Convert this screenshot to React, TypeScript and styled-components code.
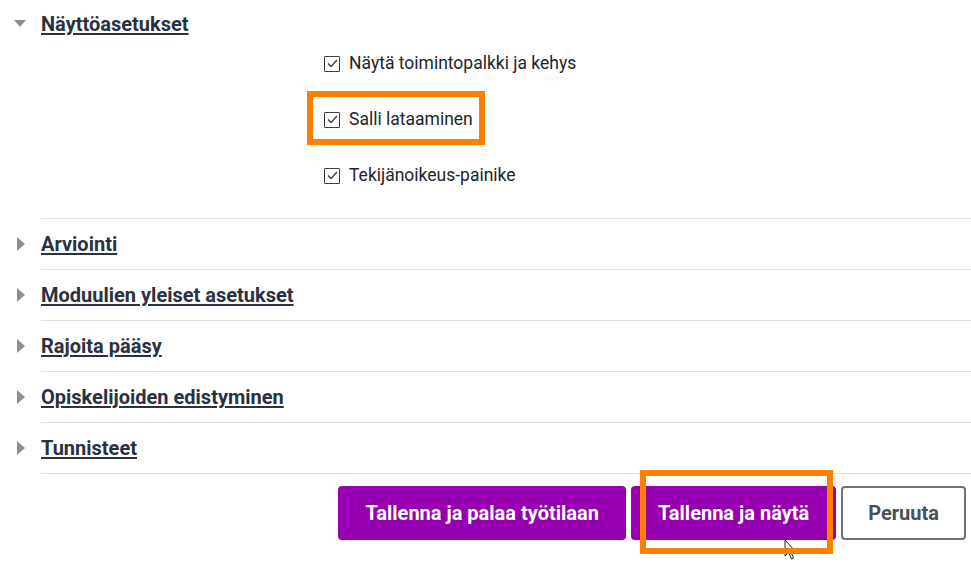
import * as React from 'react';
import styled, { createGlobalStyle } from 'styled-components';

const GlobalStyle = createGlobalStyle`
    html, body {
        margin: 0;
        padding: 0;
        background: #fff;
        overflow: hidden;
    }
    body {
        font-family: Roboto, "Liberation Sans", sans-serif;
        color: #1d2125;
    }
`;

const Page = styled.div`
    position: relative;
    width: 971px;
    height: 564px;
    overflow: hidden;
`;

const SectionHeader = styled.div`
    display: flex;
    align-items: center;
    height: 48px;
`;

const ToggleCell = styled.div`
    width: 41px;
    flex: 0 0 41px;
    display: flex;
    align-items: center;
    justify-content: center;
`;

const Caret = styled.span<{ $open?: boolean }>`
    display: block;
    width: 0;
    height: 0;
    ${(p) => p.$open ? `
        border-left: 6.5px solid transparent;
        border-right: 6.5px solid transparent;
        border-top: 7px solid #8f8f8f;
        margin-left: -1px;
        margin-top: -2px;
    ` : `
        border-top: 7px solid transparent;
        border-bottom: 7px solid transparent;
        border-left: 8px solid #8f8f8f;
        margin-left: 1px;
    `}
`;

const SectionTitle = styled.a`
    font-size: 20px;
    font-weight: 700;
    color: #2a3140;
    text-decoration: underline;
    text-underline-offset: 2px;
    text-decoration-thickness: 1.5px;
    cursor: pointer;
`;

const OptionList = styled.div`
    display: flex;
    flex-direction: column;
    padding-left: 324px;
    margin-top: -13px;
    padding-bottom: 15px;
`;

const OptionRow = styled.label`
    position: relative;
    display: flex;
    align-items: center;
    gap: 9px;
    height: 56px;
    width: max-content;
    font-size: 17.5px;
    color: #212529;
`;

const Highlight = styled.div`
    position: relative;
    width: max-content;

    &::after {
        content: '';
        position: absolute;
        pointer-events: none;
        border: 6px solid #ff8000;
    }
`;

const OptionHighlight = styled(Highlight)`
    &::after {
        left: -17px;
        right: -12px;
        top: 0;
        bottom: 2px;
    }
`;

const Box = styled.span`
    width: 16px;
    height: 16px;
    flex: 0 0 16px;
    box-sizing: border-box;
    border: 1.5px solid #3a3d42;
    border-radius: 1px;
    display: flex;
    align-items: center;
    justify-content: center;
    margin-top: 1px;
`;

const CollapsedRow = styled.div`
    display: flex;
    align-items: stretch;
    height: 51px;
`;

const TitleCell = styled.div`
    flex: 1;
    display: flex;
    align-items: center;
    border-top: 1px solid #dee2e6;
`;

const Footer = styled.div`
    margin-left: 41px;
    border-top: 1px solid #dee2e6;
    padding: 12px 5px 0 0;
    display: flex;
    justify-content: flex-end;
    gap: 5px;
`;

const Button = styled.button<{ $primary?: boolean }>`
    height: 54px;
    box-sizing: border-box;
    padding: 0 25px;
    border-radius: 4px;
    font-family: Roboto, "Liberation Sans", sans-serif;
    font-size: 20px;
    font-weight: 700;
    border: 2px solid ${(p) => p.$primary ? '#9700b0' : '#6c757d'};
    background: ${(p) => p.$primary ? '#9700b0' : '#fff'};
    color: ${(p) => p.$primary ? '#fff' : '#4a5058'};
    cursor: pointer;
`;

const ButtonHighlight = styled(Highlight)`
    display: flex;

    &::after {
        left: 9px;
        right: 3px;
        top: -16px;
        bottom: -14px;
    }
`;

const Pointer = styled.svg`
    position: absolute;
    left: 784px;
    top: 539px;
`;

const CheckIcon = () => (
    <svg width="11" height="9" viewBox="0 0 11 9">
        <path d="M1 4.5 L4 7.5 L10 1" fill="none" stroke="#3a3d42" strokeWidth="1.4" />
    </svg>
);

const Option = ({ label }: { label: string }) => (
    <OptionRow>
        <Box><CheckIcon /></Box>
        {label}
    </OptionRow>
);

const collapsed = [
    'Arviointi',
    'Moduulien yleiset asetukset',
    'Rajoita pääsy',
    'Opiskelijoiden edistyminen',
    'Tunnisteet'
];

export default function App() {
    return (
        <Page>
            <GlobalStyle />
            <SectionHeader>
                <ToggleCell><Caret $open /></ToggleCell>
                <SectionTitle>Näyttöasetukset</SectionTitle>
            </SectionHeader>
            <OptionList>
                <Option label="Näytä toimintopalkki ja kehys" />
                <OptionHighlight>
                    <Option label="Salli lataaminen" />
                </OptionHighlight>
                <Option label="Tekijänoikeus-painike" />
            </OptionList>
            {collapsed.map((title) => (
                <CollapsedRow key={title}>
                    <ToggleCell><Caret /></ToggleCell>
                    <TitleCell>
                        <SectionTitle>{title}</SectionTitle>
                    </TitleCell>
                </CollapsedRow>
            ))}
            <Pointer width="13" height="22" viewBox="0 0 13 22">
                <path d="M1 1 L1 17 L4.5 13.5 L7.5 20 L9.5 19 L6.8 12.8 L11.5 12.5 Z" fill="#fff" stroke="#222" strokeWidth="1" />
            </Pointer>
            <Footer>
                <Button $primary>Tallenna ja palaa työtilaan</Button>
                <ButtonHighlight>
                    <Button $primary>Tallenna ja näytä</Button>
                </ButtonHighlight>
                <Button>Peruuta</Button>
            </Footer>
        </Page>
    );
}
